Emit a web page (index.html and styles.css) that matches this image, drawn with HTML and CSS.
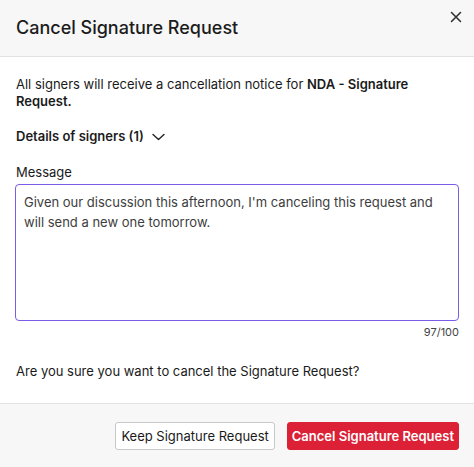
FILE: index.html
```html
<!DOCTYPE html>
<html lang="en">
<head>
  <meta charset="UTF-8">
  <meta name="viewport" content="width=device-width, initial-scale=1.0">
  <title>Cancel Signature Request</title>
  <link rel="stylesheet" href="styles.css">
</head>
<body>
  <div class="modal">
    <!-- Cabeçalho -->
    <div class="modal-header">
      <h1 class="modal-title">Cancel Signature Request</h1>
      <button class="close-button" type="button" aria-label="Close">
        <svg width="16" height="16" viewBox="0 0 16 16" fill="none" stroke="#333" stroke-width="1.6" stroke-linecap="round">
          <path d="M3.5 3.5 L12.5 12.5 M12.5 3.5 L3.5 12.5"/>
        </svg>
      </button>
    </div>

    <div class="modal-body">
      <p class="notice">All signers will receive a cancellation notice for <strong>NDA - Signature Request.</strong></p>

      <button class="details-toggle" type="button">
        Details of signers (1)
        <svg width="13" height="8" viewBox="0 0 13 8" fill="none" stroke="#222" stroke-width="1.4" stroke-linecap="round" stroke-linejoin="round">
          <path d="M1 1.5 L6.5 6.5 L12 1.5"/>
        </svg>
      </button>

      <label class="field-label" for="message">Message</label>
      <textarea id="message" class="message-input" maxlength="100">Given our discussion this afternoon, I'm canceling this request and will send a new one tomorrow.</textarea>
      <div class="char-count">97/100</div>

      <p class="question">Are you sure you want to cancel the Signature Request?</p>
    </div>

    <!-- Rodapé com ações -->
    <div class="modal-footer">
      <button class="btn btn-secondary" type="button">Keep Signature Request</button>
      <button class="btn btn-danger" type="button">Cancel Signature Request</button>
    </div>
  </div>
</body>
</html>
```

FILE: styles.css
```css
/* Estilos globais */
body {
  margin: 0;
  padding: 0;
  background-color: #fff;
  color: #1a1a1a;
  font-family: Inter, "Noto Sans", Arial, sans-serif;
  font-size: 13px;
}
.modal {
  display: flex;
  flex-direction: column;
  min-height: 467px;
}
/* Cabeçalho */
.modal-header {
  display: flex;
  justify-content: space-between;
  align-items: flex-start;
  height: 57px;
  padding: 9px 10px 0 16px;
  box-sizing: border-box;
  background-color: #f7f7f7;
  border-bottom: 1px solid #e2e2e2;
}
.modal-title {
  margin: 7px 0 0;
  font-size: 18px;
  line-height: 24px;
  font-weight: 500;
  color: #1c1c1c;
}
.close-button {
  background: none;
  border: none;
  padding: 0;
  width: 16px;
  height: 16px;
  cursor: pointer;
  display: block;
}
.close-button svg {
  display: block;
}
/* Corpo */
.modal-body {
  padding: 19px 15px 0 16px;
  display: flex;
  flex-direction: column;
}
.notice {
  margin: 0;
  line-height: 17px;
}
.notice strong {
  font-weight: 600;
}
.details-toggle {
  display: flex;
  align-items: center;
  gap: 8px;
  margin-top: 18px;
  padding: 0;
  border: none;
  background: none;
  font-family: inherit;
  font-size: 13px;
  line-height: 17px;
  font-weight: 600;
  color: #1c1c1c;
  cursor: pointer;
  align-self: flex-start;
}
.field-label {
  margin-top: 19px;
  line-height: 17px;
  color: #1a1a1a;
}
.message-input {
  margin-top: 3px;
  margin-left: -1px;
  height: 137px;
  box-sizing: border-box;
  padding: 7px 8px 8px;
  border: 1px solid #7b5ce6;
  border-radius: 4px;
  resize: none;
  font-family: inherit;
  font-size: 13px;
  line-height: 20px;
  color: #3d3d3d;
  outline: none;
}
.char-count {
  margin-top: 3px;
  text-align: right;
  font-size: 11px;
  line-height: 16px;
  color: #444;
}
.question {
  margin: 23px 0 0;
  line-height: 17px;
}
/* Rodapé */
.modal-footer {
  display: flex;
  justify-content: flex-end;
  gap: 12px;
  margin-top: 23px;
  padding: 18px 15px 16px;
  background-color: #f7f7f7;
  border-top: 1px solid #e2e2e2;
  flex: 1;
  align-items: flex-start;
}
.btn {
  height: 28px;
  padding: 0 5px;
  font-family: inherit;
  font-size: 13px;
  border-radius: 3px;
  cursor: pointer;
}
.btn-secondary {
  background-color: #fff;
  border: 1px solid #c8c8c8;
  color: #1a1a1a;
}
.btn-danger {
  padding: 0 4px;
  background-color: #dc2035;
  border: 1px solid #dc2035;
  color: #fff;
  font-weight: 600;
}
```
